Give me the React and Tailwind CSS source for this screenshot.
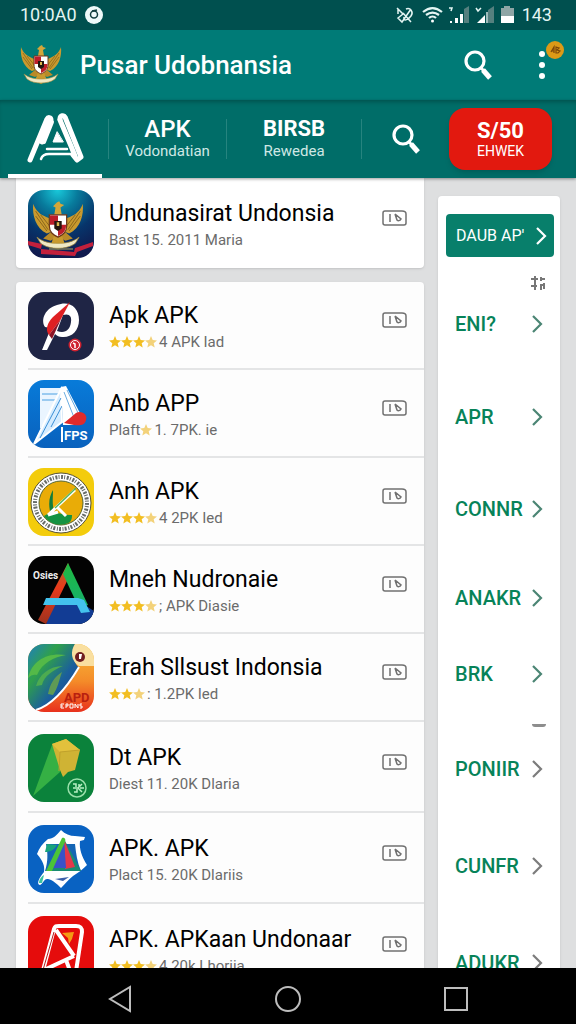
import clsx from 'clsx'

const STAR = 'M6 0l1.700 4 4.300.4-3.300 2.800 1 4.300L6 9.300l-3.700 2.200 1-4.300L0 4.400 4.300 4z'

function Garuda({ x = 0, y = 0, size = 42 }) {
  return (
    <svg x={x} y={y} width={size} height={size} viewBox="0 0 42 42" aria-hidden="true">
      <path d="M1 3c-1 9 2 20 11 24l8-3V14c-3 2-7 1-10-1C5 11 2 6 1 3z" fill="#c99a2e" />
      <path d="M41 3c1 9-2 20-11 24l-8-3V14c3 2 7 1 10-1 5-2 8-7 9-10z" fill="#c99a2e" />
      <path d="M3 9l10 15M3 13l9 12M7 12l8 10M39 9L29 24M39 13l-9 12M35 12l-8 10" stroke="#8a651c" strokeWidth=".8" />
      <path d="M17 5l3-3 2-1 1 2 3 1-3 2 1 6h-6l1-6z" fill="#d3a63a" />
      <path d="M15 26l-6 5 6 2 5-3h2l5 3 6-2-6-5z" fill="#b98a28" />
      <path d="M18 28h6l3 9-6 3-6-3z" fill="#c99a2e" />
      <path d="M14 12h14v9c0 5-3 7-7 9-4-2-7-4-7-9z" fill="#fff" stroke="#6d3717" strokeWidth="1" />
      <path d="M14.500 12.500H21V20h-6.500zM21 20h6.500c0 5-2 7-6.500 9z" fill="#bd1e2a" />
      <path d="M18 17h6v6l-3 2-3-2z" fill="#24160f" />
      <path d="M20 18h2v3h-2z" fill="#dcb74e" />
      <path d="M4 30c5 4 11 5 17 5s12-1 17-5l-3 5c-4 3-9 4-14 4s-10-1-14-4z" fill="#efe8c4" stroke="#a68939" strokeWidth=".6" />
    </svg>
  )
}

function AppIcon({ name }) {
  return (
    <svg viewBox="0 0 66 68" preserveAspectRatio="none" className="h-[68px] w-[66px] shrink-0 rounded-2xl" aria-hidden="true">
      {name === 'garuda' && (
        <>
          <defs>
            <radialGradient id="sky" cx=".45" cy="0" r="1">
              <stop offset="0" stopColor="#19c8da" />
              <stop offset=".3" stopColor="#087b9c" />
              <stop offset=".65" stopColor="#07356b" />
              <stop offset="1" stopColor="#101a4e" />
            </radialGradient>
          </defs>
          <rect width="66" height="68" fill="url(#sky)" />
          <path d="M0 51l14 3-1 5 33 3 1-4 18-6v4l-16 6-2 4-34-2v-5L0 55z" fill="#c3203c" />
          <Garuda x={4} y={10} size={52} />
          <path d="M21 59h24" stroke="#7d7a5a" strokeWidth="1.500" />
        </>
      )}
      {name === 'ark' && (
        <>
          <rect width="66" height="68" fill="#1f2545" />
          <path d="M29 13c12-5 22 2 22 15 0 11-8 18-17 17-3 0-5-1-7-3L19 58h-5l9-22-6-1c-5-8 1-19 12-22z" fill="#fff" />
          <path d="M35 23c6-2 9 1 8 7-1 8-6 12-14 9z" fill="#1f2545" />
          <path d="M42 10l-9 17-12 16c-4-5-2-12 4-18z" fill="#df2023" />
          <path d="M21 43l12-16-9 20z" fill="#8c1425" />
          <circle cx="47" cy="53" r="6.500" fill="#cf2230" />
          <circle cx="47" cy="53" r="4.500" fill="none" stroke="#fff" />
          <path d="M45 51l2 1v4" fill="none" stroke="#fff" strokeWidth="1.500" />
        </>
      )}
      {name === 'anb' && (
        <>
          <defs>
            <linearGradient id="blue" x2="0" y2="1">
              <stop offset="0" stopColor="#087bd9" />
              <stop offset="1" stopColor="#0961bd" />
            </linearGradient>
          </defs>
          <rect width="66" height="68" fill="url(#blue)" />
          <path d="M12 8h22L20 39l-8 10z" fill="#eaf5ff" />
          <path d="M14 14h17M14 20h14" stroke="#4ba0e2" strokeWidth="1" />
          <path d="M34 7L6 64l28-22-1-24z" fill="#d5ecff" stroke="#fff" strokeWidth="2" />
          <path d="M33 18L12 58M34 26L23 47" stroke="#3b8fd5" />
          <path d="M33 7l5-1 16 31-6 8H35z" fill="#fff" />
          <path d="M36 12l11 28M39 10l13 27" stroke="#6bace0" />
          <path d="M36 43l12-10c6-3 12 2 10 7-1 5-6 6-12 5z" fill="#df2b2c" />
          <path d="M34 47v15" stroke="#fff" strokeWidth="2" />
          <text x="36" y="60" fontSize="13" fontWeight="700" fill="#fff" fontFamily="Roboto">FPS</text>
        </>
      )}
      {name === 'anh' && (
        <>
          <rect width="66" height="68" fill="#f3cc0c" />
          <circle cx="33" cy="35" r="30" fill="#fff" stroke="#545036" strokeWidth="1" />
          <circle cx="33" cy="35" r="26" fill="none" stroke="#666b68" strokeWidth="4" strokeDasharray="2 1.200 1 1.600" />
          <circle cx="33" cy="35" r="22" fill="#e9ac07" stroke="#556632" strokeWidth="1" />
          <path d="M16 48c10-8 17 0 28-1 0 2 0 4-2 7-8 5-20 3-26-6z" fill="#159342" />
          <path d="M22 43c-2-9 0-16 3-21 0 9-1 14 1 20z" fill="#137c3b" />
          <path d="M20 47l27-25M29 39l9 9M20 47l10-3" stroke="#fff" strokeWidth="3" />
          <path d="M27 40l21-20" stroke="#56b45b" strokeWidth="1.500" />
        </>
      )}
      {name === 'mneh' && (
        <>
          <defs>
            <linearGradient id="leg" x2="0" y2="1">
              <stop offset="0" stopColor="#1fb940" />
              <stop offset="1" stopColor="#16b06e" />
            </linearGradient>
            <linearGradient id="red" x2="0" y2="1">
              <stop offset="0" stopColor="#a56b2b" />
              <stop offset=".4" stopColor="#ea3a1b" />
              <stop offset="1" stopColor="#9e321e" />
            </linearGradient>
          </defs>
          <rect width="66" height="68" fill="#030303" />
          <path d="M24 48h31l11 7v13H18z" fill="#123c94" />
          <path d="M40 7L10 64l8 4 25-51z" fill="url(#red)" />
          <path d="M40 7l20 42-9 3-16-34z" fill="url(#leg)" />
          <path d="M18 42h32l6 2 6 12-9 1-4-8H15z" fill="#43c2ed" />
          <text x="5" y="23" fontSize="10" fontWeight="700" fill="#eee" fontFamily="Roboto">Osies</text>
        </>
      )}
      {name === 'erah' && (
        <>
          <defs>
            <linearGradient id="sunset" x2="0" y2="1">
              <stop offset="0" stopColor="#f7bd3a" />
              <stop offset=".55" stopColor="#f48b29" />
              <stop offset="1" stopColor="#e8301c" />
            </linearGradient>
            <linearGradient id="palm" x2="1" y2="1">
              <stop offset="0" stopColor="#1f7fc0" />
              <stop offset=".3" stopColor="#2fa04b" />
              <stop offset=".6" stopColor="#1b5f9c" />
              <stop offset="1" stopColor="#1a3a8f" />
            </linearGradient>
          </defs>
          <rect width="66" height="68" fill="url(#sunset)" />
          <path d="M0 0h47c-3 7-2 18 4 24C41 41 27 60 8 66L0 68z" fill="url(#palm)" />
          <path d="M0 34C4 16 20 8 38 11c-12 2-24 8-29 20-3-1-6 0-9 3z" fill="#54b948" />
          <path d="M8 42c3-11 13-20 27-20-10 4-19 10-21 19z" fill="#4dab50" />
          <path d="M20 50c2-10 6-17 14-22-3 8-4 16-9 23z" fill="#5f9a55" />
          <path d="M8 66C27 60 41 40 51 23" fill="none" stroke="#fff" strokeWidth="2" />
          <path d="M47 0h19v22H51c-8-5-9-15-4-22z" fill="#f9dfa0" />
          <circle cx="52" cy="13" r="5" fill="#701d20" />
          <path d="M51 10h3l-1 5h-2z" fill="#fff" />
          <text x="36" y="58" fontSize="13" fontWeight="700" fill="#b8200f" fontFamily="Roboto">APD</text>
          <path d="M33 60v4M33 60h3M33 62h2M33 64h3M38 64v-4h2v2h-2M42 60h3v4h-3zM47 64v-4l3 4v-4M54 60h-2v2h2v2h-2" fill="none" stroke="#fff" strokeWidth="1" />
        </>
      )}
      {name === 'dt' && (
        <>
          <rect width="66" height="68" fill="#0b823b" />
          <path d="M24 11L5 62l27-24 4-21z" fill="#35b044" />
          <path d="M24 10l14-5 14 11-5 20-7 2-5 5-3-7z" fill="#cfb334" />
          <path d="M24 10l14-5 14 11-20 2z" fill="#e2c13c" />
          <path d="M32 18l-1 19M32 18l20-2" fill="none" stroke="#bfa12c" />
          <circle cx="49" cy="54" r="9" fill="none" stroke="#9adfaa" strokeWidth="1.500" />
          <path d="M45 50h3v3M45 54h6M46 58h3v-3M54 50l-4 4 4 4M51 50v3M52 54h4" fill="none" stroke="#b9efc4" strokeWidth="1.500" />
        </>
      )}
      {name === 'shield' && (
        <>
          <rect width="66" height="68" fill="#0962c2" />
          <path d="M33 5c4 4 9 6 14 6l10 1-1 3-4 1c-1 8 2 16 7 24-4 4-9 8-14 11-5 4-8 8-12 12-4-4-8-8-13-9-4-1-5 5-8 6-4-1-1-7 4-13 1-6-1-11-7-18 2-6 6-11 11-15 5 0 9-4 13-9z" fill="#fff" />
          <path d="M18 19h29c1 9 2 18 6 27H17c3-9 3-18 1-27z" fill="#1565b4" />
          <path d="M17 27c5 0 9-2 12-7l-10-1z" fill="#19a47a" />
          <path d="M36 14l17 32H24z" fill="#198d72" />
          <path d="M36 14l11 28-10 2z" fill="#e5384a" />
          <path d="M36 15l2 28H24z" fill="#3a52c9" />
          <path d="M34 13c3-1 4 2 3 4L24 46h-6z" fill="#4bc437" />
          <path d="M27 54l14-2-6 4z" fill="#3b5ea9" />
          <path d="M11 58c0-4 3-7 5-8l-2 8z" fill="#3bc4a0" />
        </>
      )}
      {name === 'red' && (
        <>
          <rect width="66" height="68" fill="#e50c0c" />
          <path d="M13 62L26 13c1-3 2-3 5-3h17c5 0 6 2 6 6l-7 46M28 14l18 26M46 40L16 54M38 44l6 16" fill="none" stroke="#fff" strokeWidth="4" strokeLinejoin="round" />
          <path d="M15 54l11-38" stroke="#b81b1b" />
          <path d="M34 17l12-1-2 7-3 5-1-6z" fill="#f49a14" />
        </>
      )}
    </svg>
  )
}

function Stars({ from = 0, count = 4 }) {
  return (
    <svg width={count * 12} height="12" viewBox={`0 0 ${count * 12} 12`} className="mr-0.5 shrink-0" aria-hidden="true">
      {Array.from({ length: count }, (_, i) => (
        <path key={i} d={STAR} transform={`translate(${i * 12} 0)`} fill={from + i === 3 ? '#f3d27a' : '#f2be22'} />
      ))}
    </svg>
  )
}

const featured = { icon: 'garuda', title: 'Undunasirat Undonsia', meta: 'Bast 15. 2011 Maria' }

const apps = [
  { icon: 'ark', title: 'Apk APK', stars: 4, meta: '4 APK Iad' },
  { icon: 'anb', title: 'Anb APP', lead: 'Plaft', stars: 1, meta: '1. 7PK. ie' },
  { icon: 'anh', title: 'Anh APK', stars: 4, meta: '4 2PK Ied' },
  { icon: 'mneh', title: 'Mneh Nudronaie', stars: 4, meta: '; APK Diasie' },
  { icon: 'erah', title: 'Erah Sllsust Indonsia', stars: 3, meta: ': 1.2PK Ied' },
  { icon: 'dt', title: 'Dt APK', meta: 'Diest 11. 20K Dlaria', tall: true },
  { icon: 'shield', title: 'APK. APK', meta: 'Plact 15. 20K Dlariis', tall: true },
  { icon: 'red', title: 'APK. APKaan Undonaar', stars: 4, meta: '4 20k Lhoriia', tall: true },
]

const links = [
  { label: 'ENI?', className: 'h-[78px] pb-4' },
  { label: 'APR', className: 'h-[92px]' },
  { label: 'CONNR', className: 'h-[92px]' },
  { label: 'ANAKR', className: 'h-[86px]' },
  { label: 'BRK', className: 'h-[66px]' },
  { label: 'PONIIR', className: 'h-[84px]', dash: true, gray: true },
  { label: 'CUNFR', className: 'h-[110px]', gray: true },
  { label: 'ADUKR', className: 'h-[84px]', gray: true },
]

function AppRow({ app }) {
  return (
    <div className={clsx('flex items-center pl-3 pr-4', app.tall ? 'h-[91px]' : 'h-[88px]')}>
      <AppIcon name={app.icon} />
      <div className="ml-[15px] flex min-w-0 flex-1 items-start justify-between pt-1">
        <div className="min-w-0">
          <h2 className="whitespace-nowrap text-[23px] leading-7 text-black">{app.title}</h2>
          <p className="flex items-center whitespace-nowrap text-[15px] leading-6 text-[#6b6b6b]">
            {app.lead}
            {app.stars && <Stars count={app.stars} from={4 - app.stars} />}
            {app.meta}
          </p>
        </div>
        <svg width="26" height="16" viewBox="0 0 26 16" className="mt-2.5 shrink-0" fill="none" stroke="#707070" strokeWidth="1.500" aria-hidden="true">
          <path d="M3 1h17c3 0 4 1 4 3v9c0 1-1 2-2 2H3c-1 0-2-1-2-2V3c0-1 1-2 2-2zM8 4v8M13 4l6 5c-1 2-3 2-4 1l-2-6" />
        </svg>
      </div>
    </div>
  )
}

function SearchIcon() {
  return (
    <svg width="28" height="30" viewBox="0 0 28 30" fill="none" stroke="#fff" aria-hidden="true">
      <circle cx="11" cy="11" r="9" strokeWidth="3.200" />
      <path d="M17 18l3 3" strokeWidth="3" />
      <path d="M19 20l7 8" strokeWidth="5" />
    </svg>
  )
}

function Chevron({ className }) {
  return (
    <svg width="12" height="18" viewBox="0 0 12 18" fill="none" stroke="currentColor" strokeWidth="2.200" className={className} aria-hidden="true">
      <path d="M1 1l8 8-8 8" />
    </svg>
  )
}

function StatusBar() {
  return (
    <div className="flex h-[30px] shrink-0 items-center bg-[#00504f] pl-5 pr-6 text-lg leading-5 text-[#e4f5f3]">
      <span>10:0A0</span>
      <svg width="18" height="18" viewBox="0 0 18 18" className="ml-2" aria-hidden="true">
        <circle cx="9" cy="9" r="9" fill="#eefafa" />
        <circle cx="9" cy="8.500" r="3.500" fill="none" stroke="#123f40" strokeWidth="1.500" />
        <path d="M7 5l5-1" stroke="#123f40" strokeWidth="1.500" />
      </svg>
      <svg width="120" height="20" viewBox="0 0 120 20" className="ml-auto mr-1.5" fill="none" stroke="#e4f5f3" aria-hidden="true">
        <path d="M1 3l6 6-5 4 4 4 9-13M2 4v5M7 8l8 9M10 4c4-2 8 3 5 7s-8 6-7 1" strokeWidth="1.500" />
        <path d="M27 7c6-5 13-5 19 0M30 10c4-3 9-3 13 0M33 13c2-2 5-2 7 0" strokeWidth="2.200" />
        <circle cx="36.500" cy="16" r="1.500" fill="#fff" stroke="none" />
        <path d="M68 4l5-3v17h-5z" fill="#55807f" stroke="none" />
        <path d="M54 18v-2h2v2zM59 18v-5h3v5zM64 18V9h3v9z" fill="#fff" stroke="none" />
        <path d="M53 3h3l-1 3" strokeWidth="1.500" />
        <path d="M92 18V5l6-4v17z" fill="#55807f" stroke="none" />
        <path d="M81 18l8-8v8z" fill="#fff" stroke="none" />
        <path d="M91 18V7" strokeWidth="2" stroke="#9fbcbb" />
        <path d="M80 3l2 3 3-3" strokeWidth="1.500" />
        <path d="M105 3h3V1h6v2h4v8h-13z" fill="#8ea5a5" stroke="none" />
        <path d="M105 11h13v7h-13z" fill="#fff" stroke="none" />
      </svg>
      <span>143</span>
    </div>
  )
}

export default function App() {
  return (
    <div className="flex h-screen flex-col overflow-hidden bg-[#dedfe0] font-['Roboto',sans-serif]">
      <StatusBar />

      <header className="flex h-[70px] shrink-0 items-center bg-[#007b77] pl-5 pr-4 text-white">
        <Garuda />
        <h1 className="ml-[18px] whitespace-nowrap text-[26px] font-medium leading-8">Pusar Udobnansia</h1>
        <button type="button" aria-label="Search" className="ml-auto">
          <SearchIcon />
        </button>
        <button type="button" aria-label="More options" className="relative ml-8 flex h-10 w-9 items-center justify-center">
          <svg width="6" height="30" viewBox="0 0 6 30" fill="#fff" aria-hidden="true">
            <circle cx="3" cy="4" r="3" />
            <circle cx="3" cy="15" r="3" />
            <circle cx="3" cy="26" r="3" />
          </svg>
          <svg width="18" height="18" viewBox="0 0 18 18" className="absolute -right-1 -top-1" aria-hidden="true">
            <circle cx="9" cy="9" r="9" fill="#dc9a17" />
            <path d="M5 11l3-5v6M5 10h3M10 6l3 1-2 2 3 1-2 2h-2z" fill="none" stroke="#7b4609" strokeWidth="1.200" />
          </svg>
        </button>
      </header>

      <nav className="z-10 flex h-[78px] shrink-0 items-center bg-[#006d68] pl-2 pr-6 text-white shadow-[inset_0_4px_4px_-2px_rgba(0,0,0,0.25),0_1px_3px_rgba(0,0,0,0.4)]">
        <a href="#home" aria-label="Home" className="mr-[6px] flex h-full w-[94px] items-center justify-center border-b-4 border-white">
          <svg width="60" height="52" viewBox="0 0 60 52" fill="none" stroke="#fff" strokeWidth="5" strokeLinecap="round" strokeLinejoin="round" aria-hidden="true">
            <path d="M5 49L22 8c1-2 4-2 4 1l-9 22" />
            <path d="M27 11l-8 20" strokeWidth="4" />
            <path d="M32 21l-4 10h10z" fill="#fff" strokeWidth="1" />
            <path d="M35 8c0-4 4-4 5-2l16 40-4 3-4-5" />
            <path d="M35 9l11 26 4 10" strokeWidth="5" />
            <path d="M22 38h20" strokeWidth="2.500" />
            <path d="M16 48c1-3 4-5 8-5h26" strokeWidth="2.500" />
          </svg>
        </a>
        <a href="#apk" className="flex h-10 flex-7 flex-col items-center justify-center border-l border-[#26847f]">
          <span className="text-2xl font-medium leading-6">APK</span>
          <span className="text-[15px] leading-5 text-[#cfe8e5]">Vodondatian</span>
        </a>
        <a href="#reviews" className="flex h-10 flex-8 flex-col items-center justify-center border-x border-[#26847f]">
          <span className="text-[22px] font-bold leading-6">BIRSB</span>
          <span className="text-[15px] leading-5 text-[#cfe8e5]">Rewedea</span>
        </a>
        <button type="button" aria-label="Search apps" className="flex w-[87px] justify-center">
          <SearchIcon />
        </button>
        <button type="button" className="flex h-[62px] w-[103px] flex-col items-center justify-center rounded-2xl bg-[#e2190f] shadow-md">
          <span className="text-[22px] font-bold leading-6">S/50</span>
          <span className="text-sm leading-4">EHWEK</span>
        </button>
      </nav>

      <main className="flex min-h-0 flex-1 items-start gap-[14px] overflow-hidden px-4">
        <div className="min-w-0 flex-1">
          <section className="rounded-b bg-white pt-0.5 shadow">
            <AppRow app={featured} />
          </section>
          <ul className="mt-[14px] rounded-t bg-[#fdfdfd] shadow">
            {apps.map((app, i) => (
              <li key={app.title}>
                {i > 0 && <div className="-mt-0.5 ml-3 h-0.5 bg-[#e4e5e6]" />}
                <AppRow app={app} />
              </li>
            ))}
          </ul>
        </div>

        <aside className="mt-[18px] w-[122px] shrink-0 rounded-t bg-white pl-2 pr-1.5 pt-[18px] shadow">
          <button type="button" className="flex h-[43px] w-full items-center justify-between rounded bg-[#087f6b] pl-[10px] pr-1.5 text-base text-white">
            <span className="whitespace-nowrap">DAUB AP'</span>
            <Chevron />
          </button>
          <div className="flex h-9 items-end justify-end pb-0.5 pr-2">
            <svg width="16" height="16" viewBox="0 0 16 16" fill="none" stroke="#777" strokeWidth="2" aria-hidden="true">
              <path d="M1 4h7M10 4h5M1 11h6M10 10h5M5 1v14M11 2v4M11 9v6M14 8v6" />
            </svg>
          </div>
          {links.map((link) => (
            <div key={link.label}>
              {link.dash && (
                <div className="flex h-5 items-end justify-end pr-2">
                  <div className="h-[3px] w-[14px] rounded-b bg-[#8d8d8d]" />
                </div>
              )}
              <a
                href="#list"
                className={clsx('flex items-center justify-between pl-[9px] pr-2.5 text-xl font-medium text-[#078359]', link.className)}
              >
                {link.label}
                <Chevron className={link.gray ? 'text-[#7c7c7c]' : 'text-[#4b8574]'} />
              </a>
            </div>
          ))}
        </aside>
      </main>

      <footer className="flex h-14 shrink-0 items-center justify-center gap-[136px] bg-black pt-1.5">
        <button type="button" aria-label="Back">
          <svg width="32" height="28" viewBox="0 0 32 28" fill="none" stroke="#bdbdbd" strokeWidth="2" aria-hidden="true">
            <path d="M26 2v24L6 14z" />
          </svg>
        </button>
        <button type="button" aria-label="Home">
          <svg width="32" height="28" viewBox="0 0 32 28" fill="none" stroke="#bdbdbd" strokeWidth="2" aria-hidden="true">
            <circle cx="16" cy="14" r="12" />
          </svg>
        </button>
        <button type="button" aria-label="Recent apps">
          <svg width="32" height="28" viewBox="0 0 32 28" fill="none" stroke="#bdbdbd" strokeWidth="2" aria-hidden="true">
            <path d="M5 3h22v22H5z" />
          </svg>
        </button>
      </footer>
    </div>
  )
}
